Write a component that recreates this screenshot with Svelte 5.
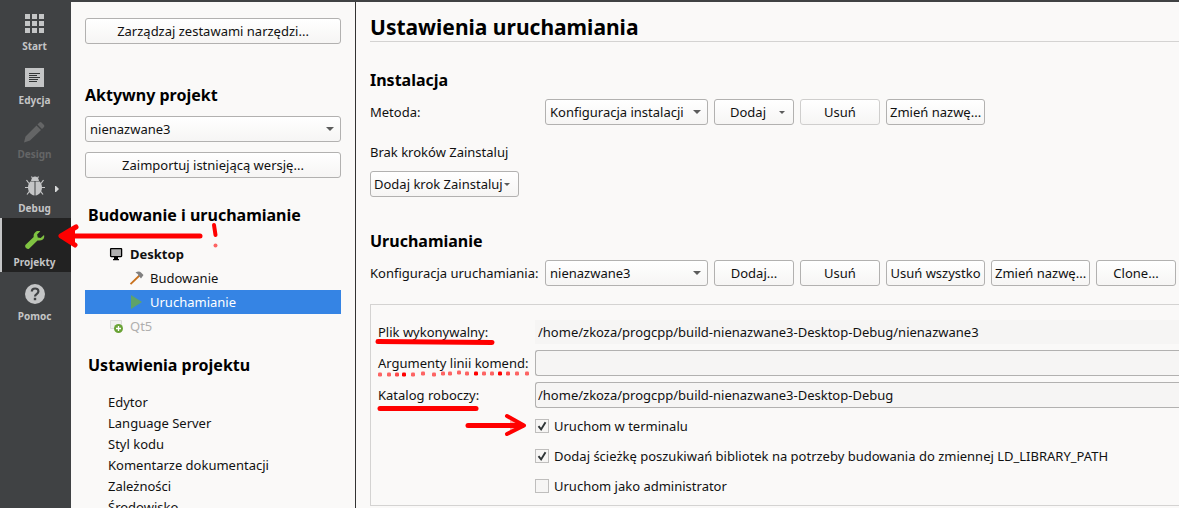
<script>
  let project = $state('nienazwane3');
  let method = $state('Konfiguracja instalacji');
  let runConfig = $state('nienazwane3');
  let args = $state('');
  let workDir = $state('/home/zkoza/progcpp/build-nienazwane3-Desktop-Debug');
  const executable = '/home/zkoza/progcpp/build-nienazwane3-Desktop-Debug/nienazwane3';

  let options = $state([
    { label: 'Uruchom w terminalu', on: true },
    { label: 'Dodaj ścieżkę poszukiwań bibliotek na potrzeby budowania do zmiennej LD_LIBRARY_PATH', on: true },
    { label: 'Uruchom jako administrator', on: false }
  ]);

  const modes = [
    { id: 'start', label: 'Start' },
    { id: 'edit', label: 'Edycja' },
    { id: 'design', label: 'Design', disabled: true },
    { id: 'debug', label: 'Debug' },
    { id: 'projects', label: 'Projekty', active: true },
    { id: 'help', label: 'Pomoc' }
  ];

  const settings = ['Edytor', 'Language Server', 'Styl kodu', 'Komentarze dokumentacji', 'Zależności', 'Środowisko'];

  // Dotted underline: x, y and opacity of each dot
  const dots = [
    [380, 374, 0.6], [389, 374, 0.6], [397, 374, 0.7], [404, 374, 1], [413, 374, 0.6], [423, 373, 0.6],
    [434, 374, 0.6], [443, 373, 0.6], [450, 373, 0.6], [459, 372, 0.6], [467, 373, 0.6], [476, 373, 1],
    [484, 373, 0.6], [492, 373, 0.6], [500, 373, 1], [508, 373, 0.7], [517, 373, 0.6], [527, 373, 0.6]
  ];
</script>

{#snippet modeIcon(id)}
  <svg class="mode-icon" viewBox="0 0 22 22" aria-hidden="true">
    {#if id === 'start'}
      <g fill="#c4c5c6">
        {#each [1, 8, 15] as y}
          {#each [1, 8, 15] as x}
            <rect {x} {y} width="5" height="5" />
          {/each}
        {/each}
      </g>
    {:else if id === 'edit'}
      <rect x="1" y="1" width="19" height="19" fill="#c4c5c6" />
      <path d="M5 6.500h11M5 8.500h8M5 10.500h11M5 12.500h9M5 14.500h8" stroke="#333536" />
    {:else if id === 'design'}
      <path d="M0 21.500l1.500-6L12.500 4.500l4.500 4.500L6 19.500zM13.500 3.500l2-2q1-.8 2 0l2.500 2.500q.8 1 0 2l-2 2z" fill="#646566" />
    {:else if id === 'debug'}
      <g fill="none" stroke="#c4c5c6" stroke-width="1.200">
        <path d="M7.500 1.500L9 4M14.500 1.500L13 4M5 8.500L2.500 5M17 8.500L19.500 5M5 12.500H1M17 12.500h4M6 15.500l-3 4M16 15.500l3 4" />
      </g>
      <path d="M7 6C7.300 3 9 1.500 11 1.500S14.700 3 15 6z" fill="#c4c5c6" />
      <path d="M10.500 6.500v14C6.500 20 4 16.500 4 12.500 4 10 4.800 8 6.300 6.500zM11.500 6.500v14c4-.5 6.500-4 6.500-8 0-2.500-.8-4.500-2.300-6z" fill="#c4c5c6" />
    {:else if id === 'projects'}
      <path d="M20 6l-3.300 3-2.900-.6-.7-2.900 3.200-3.200C13 .8 9 3.500 9.700 8L1.600 15.700c-1.800 2.200 1.500 5.500 3.700 3.700l8.200-8c4.500.9 7.700-1.700 6.500-5.400z" fill="#80c342" />
    {:else}
      <circle cx="11" cy="11" r="10" fill="#c4c5c6" />
      <path d="M7.800 8.600C7.800 4.500 14.400 4.500 14.400 8.400c0 2.600-3.400 2.600-3.400 5" fill="none" stroke="#404244" stroke-width="2.200" />
      <rect x="9.800" y="14.800" width="2.400" height="2.400" fill="#404244" />
    {/if}
  </svg>
{/snippet}

{#snippet arrow()}
  <svg class="arrow" viewBox="0 0 8 4" aria-hidden="true"><path d="M0 0h8L4 4z" fill="#5c5c5c" /></svg>
{/snippet}

<div class="window">
  <nav class="modes" aria-label="Tryby">
    {#each modes as mode}
      <button class="mode" class:active={mode.active} disabled={mode.disabled}>
        {@render modeIcon(mode.id)}
        <span>{mode.label}</span>
        {#if mode.id === 'debug'}
          <svg class="more" viewBox="0 0 4 6" aria-hidden="true"><path d="M0 0h1l3 3-3 3H0z" fill="#d6d7d8" /></svg>
        {/if}
      </button>
    {/each}
  </nav>

  <aside class="panel">
    <button class="btn">Zarządzaj zestawami narzędzi...</button>

    <h2 class="active-title">Aktywny projekt</h2>
    <div class="combo">
      <select bind:value={project} aria-label="Aktywny projekt">
        <option>nienazwane3</option>
      </select>
      {@render arrow()}
    </div>
    <button class="btn import">Zaimportuj istniejącą wersję...</button>

    <h2 class="indent">Budowanie i uruchamianie</h2>
    <ul class="tree">
      <li class="kit">
        <svg viewBox="0 0 16 16" aria-hidden="true">
          <rect x="2.600" y="2.600" width="11" height="8" rx="0.500" fill="#b0b0b0" stroke="#000" stroke-width="1.300" />
          <path d="M6 11h4v2h1v1.200H5V13h1z" />
        </svg>
        <strong>Desktop</strong>
      </li>
      <li class="step">
        <svg viewBox="0 0 16 16" aria-hidden="true">
          <path d="M2.500 14.200L11.500 5.500" stroke="#c8711d" stroke-width="1.800" />
          <path d="M7.500 2.500C9.500 1 12 1 13 2.500L15.500 5l-2.500 3.500L10.500 5.500C10 4 9 3.500 7.500 2.500z" fill="#808080" />
        </svg>
        Budowanie
      </li>
      <li class="step selected">
        <svg viewBox="0 0 16 16" aria-hidden="true"><path d="M3 1l11 7-11 7z" fill="#5fa36a" /></svg>
        Uruchamianie
      </li>
      <li class="kit dim">
        <svg viewBox="0 0 16 16" aria-hidden="true">
          <path d="M2.500 2.500h11v8h-11z" fill="#f0f0ef" stroke="#dcdcdb" />
          <circle cx="10.500" cy="10.500" r="4.500" fill="#6aa336" />
          <path d="M10.500 8v5M8 10.500h5" stroke="#fff" stroke-width="1.300" />
        </svg>
        Qt5
      </li>
    </ul>

    <h2 class="indent">Ustawienia projektu</h2>
    <ul class="settings">
      {#each settings as item}
        <li>{item}</li>
      {/each}
    </ul>
  </aside>

  <main>
    <h1>Ustawienia uruchamiania</h1>

    <h2 class="install">Instalacja</h2>
    <div class="row">
      <label for="method">Metoda:</label>
      <div class="combo">
        <select id="method" bind:value={method}>
          <option>Konfiguracja instalacji</option>
        </select>
        {@render arrow()}
      </div>
      <button class="btn menu"><span>Dodaj</span>{@render arrow()}</button>
      <button class="btn faint">Usuń</button>
      <button class="btn wide">Zmień nazwę...</button>
    </div>
    <p>Brak kroków Zainstaluj</p>
    <button class="btn add-step">Dodaj krok Zainstaluj{@render arrow()}</button>

    <h2 class="run">Uruchamianie</h2>
    <div class="row">
      <label for="config">Konfiguracja uruchamiania:</label>
      <div class="combo">
        <select id="config" bind:value={runConfig}>
          <option>nienazwane3</option>
        </select>
        {@render arrow()}
      </div>
      <button class="btn">Dodaj...</button>
      <button class="btn">Usuń</button>
      <button class="btn wide">Usuń wszystko</button>
      <button class="btn wide">Zmień nazwę...</button>
      <button class="btn">Clone...</button>
    </div>

    <section class="group">
      <label for="exe">Plik wykonywalny:</label>
      <input id="exe" class="plain" type="text" value={executable} readonly />
      <label for="args">Argumenty linii komend:</label>
      <input id="args" type="text" bind:value={args} />
      <label for="dir">Katalog roboczy:</label>
      <input id="dir" type="text" bind:value={workDir} />
      <div class="checks">
        {#each options as option}
          <label class="check">
            <span class="box">
              <input type="checkbox" bind:checked={option.on} />
              {#if option.on}
                <svg viewBox="0 0 14 14" aria-hidden="true">
                  <path d="M3.500 7.200l2.600 3.200 4.400-7.200" fill="none" stroke="#2e3436" stroke-width="1.900" />
                </svg>
              {/if}
            </span>
            {option.label}
          </label>
        {/each}
      </div>
    </section>
  </main>

  <svg class="marks" width="540" height="450" viewBox="0 0 540 450" aria-hidden="true">
    <g fill="none" stroke="#f00" stroke-linecap="round" stroke-linejoin="round">
      <path d="M200 236H62" stroke-width="5" />
      <path d="M76 227L61 236l14 9" stroke-width="5" />
      <path d="M214 225l1.500 10" stroke-width="4" />
      <path d="M378 341.500l114 1" stroke-width="5" />
      <path d="M380 408.500h96" stroke-width="5" />
      <path d="M468 425.500h54" stroke-width="5" />
      <path d="M507 416l17 9.500-17 8.500" stroke-width="4" />
    </g>
    <path d="M60 236l15-8v16z" fill="#f00" />
    <path d="M510 418l15 7.500-15 7z" fill="#f00" opacity="0.3" />
    <circle cx="215.500" cy="245.500" r="2" fill="#f00" opacity="0.6" />
    {#each dots as [x, y, opacity]}
      <rect x={x - 2} y={y - 1.500} width="4" height="4" rx="1.200" fill="#f00" {opacity} />
    {/each}
  </svg>
</div>

<style>
  :global(body) {
    margin: 0;
  }

  .window {
    position: relative;
    box-sizing: border-box;
    display: flex;
    height: 100vh;
    overflow: hidden;
    border-top: 2px solid #404244;
    background: #faf9f8;
    color: #111;
    font: 13px/20px "Noto Sans", sans-serif;
  }

  .window * {
    box-sizing: border-box;
  }

  button, input, select {
    margin: 0;
    font: inherit;
    color: inherit;
  }

  h1, h2, p, ul {
    margin: 0;
    padding: 0;
  }

  ul {
    list-style: none;
  }

  h1, h2 {
    color: #000;
    font-weight: 700;
  }

  h2 {
    font-size: 16px;
    line-height: 24px;
  }

  svg {
    display: block;
    flex: none;
  }

  .modes {
    flex: none;
    width: 71px;
    background: #404244;
  }

  .mode {
    position: relative;
    display: flex;
    flex-direction: column;
    align-items: center;
    gap: 4px;
    width: 100%;
    height: 54px;
    padding: 11px 2px 0 0;
    border: 0;
    background: none;
    color: #c4c5c6;
    font-size: 10px;
    font-weight: 700;
    line-height: 14px;
  }

  .mode:disabled {
    color: #646566;
  }

  .mode.active {
    background: #222;
    box-shadow: inset 2px 0 #c4c5c6;
  }

  .mode-icon {
    width: 22px;
    height: 22px;
  }

  .more {
    position: absolute;
    top: 22px;
    left: 55px;
    width: 4px;
    height: 6px;
  }

  .panel {
    flex: none;
    width: 285px;
    padding: 16px 14px 0;
    border-right: 1px solid #333;
  }

  .btn {
    min-width: 80px;
    height: 26px;
    padding: 0 3px;
    border: 1px solid #b2b1b0;
    border-radius: 3px;
    background: linear-gradient(#fff, #f6f5f4);
    line-height: 20px;
    white-space: nowrap;
  }

  .panel .btn {
    display: block;
    width: 100%;
  }

  .btn.wide {
    width: 99px;
  }

  .btn.faint {
    border-color: #cfcecd;
  }

  .active-title {
    margin: 39px 0 9px;
  }

  .btn.import {
    margin: 10px 0 25px;
  }

  .combo {
    display: grid;
    align-items: center;
  }

  .combo > :global(*) {
    grid-area: 1 / 1;
  }

  .combo select {
    appearance: none;
    width: 100%;
    height: 26px;
    padding: 0 20px 0 4px;
    border: 1px solid #b2b1b0;
    border-radius: 3px;
    background: linear-gradient(#fff, #f6f5f4);
  }

  .arrow {
    width: 8px;
    height: 4px;
    pointer-events: none;
  }

  .combo .arrow {
    justify-self: end;
    margin-right: 7px;
  }

  .indent {
    padding-left: 3px;
  }

  .tree {
    padding: 15px 0;
  }

  .tree li {
    display: flex;
    align-items: center;
    gap: 6px;
    height: 24px;
  }

  .tree svg {
    width: 16px;
    height: 16px;
  }

  .kit {
    padding-left: 23px;
  }

  .step {
    padding-left: 43px;
  }

  .selected {
    background: #3584e4;
    color: #fff;
  }

  .dim {
    color: #b0afae;
  }

  .settings {
    padding: 15px 0 0 23px;
    line-height: 21px;
  }

  main {
    flex: 1;
    min-width: 0;
    padding: 11px 0 0 14px;
  }

  h1 {
    border-bottom: 1px solid #d4d3d2;
    font-size: 21px;
    line-height: 28px;
  }

  .install {
    margin: 26px 0 7px;
  }

  .row {
    display: flex;
    align-items: center;
    gap: 6px;
  }

  .row label {
    flex: none;
    width: 169px;
    white-space: nowrap;
  }

  .row .combo {
    flex: none;
    width: 163px;
  }

  .row .btn {
    flex: none;
  }

  .menu {
    display: flex;
    align-items: center;
    gap: 13px;
    padding-left: 15px;
  }

  .btn .arrow {
    width: 6px;
    height: 3px;
  }

  p {
    margin: 17px 0 9px;
  }

  .add-step {
    display: flex;
    align-items: center;
    gap: 1px;
    width: 149px;
  }

  .run {
    margin: 32px 0 7px;
  }

  .group {
    display: grid;
    grid-template-columns: 157px 1fr;
    align-items: center;
    row-gap: 6px;
    margin-top: 18px;
    padding: 15px 0 9px 7px;
    border: 1px solid #d4d3d2;
    border-right: 0;
  }

  .group > input {
    width: 100%;
    height: 26px;
    padding: 0 2px;
    border: 1px solid #b2b1b0;
    border-right: 0;
    border-radius: 3px 0 0 3px;
    background: #f6f5f4;
  }

  .group > .plain {
    height: 24px;
    border-color: transparent;
    border-radius: 0;
  }

  .checks {
    grid-column: 2;
    display: grid;
    gap: 10px;
    padding-top: 2px;
  }

  .check {
    display: flex;
    align-items: center;
    gap: 5px;
  }

  .box {
    display: grid;
  }

  .box > * {
    grid-area: 1 / 1;
    width: 14px;
    height: 14px;
  }

  .box svg {
    pointer-events: none;
  }

  .box input {
    appearance: none;
    border: 1px solid #bfbebd;
    background: #f6f5f4;
  }

  .marks {
    position: absolute;
    top: -2px;
    left: 0;
    pointer-events: none;
  }
</style>
